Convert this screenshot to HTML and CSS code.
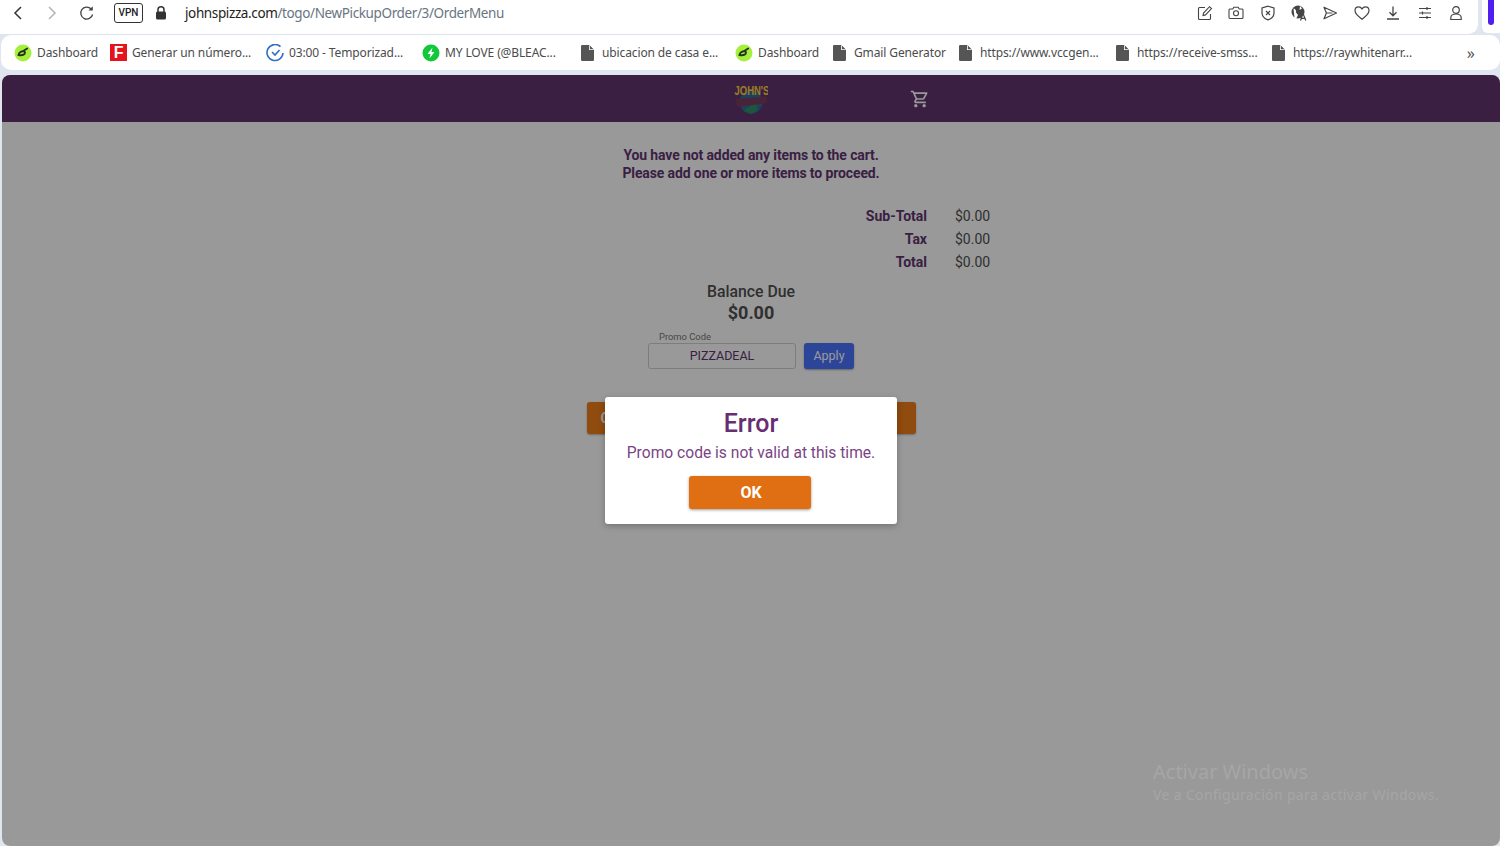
FILE: index.html
```html
<!DOCTYPE html>
<html lang="es">
<head>
<meta charset="utf-8">
<title>John's Pizza</title>
<link rel="stylesheet" href="styles.css">
</head>
<body>
<svg class="defs" width="0" height="0" aria-hidden="true">
  <symbol id="file" viewBox="0 0 13 16"><path d="M1.2 0H8l5 5v9.8a1.2 1.2 0 0 1-1.2 1.2H1.2A1.2 1.2 0 0 1 0 14.800V1.200A1.200 1.200 0 0 1 1.200 0z" fill="#555"/><path d="M8 0v5h5" fill="#fff"/><path d="M8.800 0.600 12.600 4.200H8.800z" fill="#555"/></symbol>
  <symbol id="dash" viewBox="0 0 18 18"><circle cx="9" cy="9" r="8.500" fill="#a6ef3e"/><path d="M4.500 11c.5-2.500 3-4.200 5.200-3.700 1.700.4 1.700 2.600 0 3.400-1.800.8-3.900.6-5.200.3zM10 6.500l3.200-2" fill="none" stroke="#23331a" stroke-width="1.900" stroke-linecap="round"/></symbol>
</svg>
<div class="chrome">
  <div class="topline">
    <nav class="toolbar">
      <svg class="nav back" width="10" height="14" viewBox="0 0 10 14"><path d="M8 1 2 7l6 6" fill="none" stroke="#333" stroke-width="1.500"/></svg>
      <svg class="nav fwd" width="10" height="14" viewBox="0 0 10 14"><path d="m2 1 6 6-6 6" fill="none" stroke="#b4b4b4" stroke-width="1.500"/></svg>
      <svg class="nav reload" width="16" height="16" viewBox="0 0 16 16"><path d="M13.600 9.500A6 6 0 1 1 12 3.800" fill="none" stroke="#444" stroke-width="1.300"/><path d="M13.800 1.200v4.300H9.500z" fill="#444"/></svg>
      <span class="vpn">VPN</span>
      <svg class="lock" width="12" height="14" viewBox="0 0 12 14"><path d="M3 6V3.800a3 3 0 0 1 6 0V6" fill="none" stroke="#333" stroke-width="1.500"/><rect x="1" y="5.500" width="10" height="8" rx="1.500" fill="#333"/></svg>
      <div class="url"><span class="domain">johnspizza.com</span>/togo/NewPickupOrder/3/OrderMenu</div>
      <div class="tools">
        <svg width="16" height="16" viewBox="0 0 16 16"><path d="M8 2.500H2.500a1 1 0 0 0-1 1v10a1 1 0 0 0 1 1h10a1 1 0 0 0 1-1V9M6 10.500l.5-2.500 6-6.300 2 1.900-6 6.300z" fill="none" stroke="#444" stroke-width="1.100"/></svg>
        <svg width="16" height="16" viewBox="0 0 16 16"><path d="M1 5a1 1 0 0 1 1-1h2.800l1-1.800h4.400l1 1.800H14a1 1 0 0 1 1 1v7.500a1 1 0 0 1-1 1H2a1 1 0 0 1-1-1z" fill="none" stroke="#444" stroke-width="1.100"/><circle cx="8" cy="8.300" r="2.500" fill="none" stroke="#444" stroke-width="1.100"/></svg>
        <svg width="16" height="16" viewBox="0 0 16 16"><path d="M8 1.200 14 3v5c0 3.500-2.800 5.800-6 6.900C4.800 13.800 2 11.500 2 8V3z" fill="none" stroke="#444" stroke-width="1.200"/><path d="m6 6 4 4m0-4-4 4" stroke="#444" stroke-width="1.100"/></svg>
        <svg width="16" height="16" viewBox="0 0 16 16"><circle cx="7" cy="7" r="6.500" fill="#444"/><path d="M2.500 3.500c2 .5 3 2 2.500 4L7 10l-1.500 3h-2zM9 1l2 2.500L8.500 5z" fill="#fff"/><path d="M9.500 15.500 12 8.500l2.800 7M10.500 13.300h3.500" fill="#fff" stroke="#444" stroke-width="1.200"/></svg>
        <svg width="16" height="16" viewBox="0 0 16 16"><path d="M2 2.200 14.500 8 2 13.800 4.400 8zM4.400 8h6" fill="none" stroke="#444" stroke-width="1.200" stroke-linejoin="round"/></svg>
        <svg width="16" height="16" viewBox="0 0 16 16"><path d="M8 14.200C3.500 11 1 8.600 1 5.600 1 3.300 2.700 1.800 4.600 1.800c1.400 0 2.600.8 3.400 2.100.8-1.300 2-2.100 3.400-2.100 1.900 0 3.600 1.500 3.600 3.800 0 3-2.500 5.400-7 8.600z" fill="none" stroke="#444" stroke-width="1.200"/></svg>
        <svg width="16" height="16" viewBox="0 0 16 16"><path d="M8 1.500v9M4.500 7.300 8 10.800l3.500-3.500M2 14h12" fill="none" stroke="#444" stroke-width="1.300"/></svg>
        <svg width="16" height="16" viewBox="0 0 16 16"><path d="M2 3.500h12M2 8h12M2 12.500h12" stroke="#444" stroke-width="1.200"/><path d="M10 2v3M5.500 6.500v3M10 11v3" stroke="#444" stroke-width="1.200"/></svg>
        <svg width="16" height="16" viewBox="0 0 16 16"><circle cx="8" cy="5" r="3.300" fill="none" stroke="#444" stroke-width="1.200"/><path d="M2.800 14.500v-1.600c0-2.200 2-3.900 5.200-3.900s5.200 1.700 5.200 3.900v1.600z" fill="none" stroke="#444" stroke-width="1.200"/></svg>
      </div>
    </nav>
    <div class="sidepanel"><span class="pill"></span></div>
  </div>
  <div class="bookmarks">
    <a class="bm"><svg width="18" height="18"><use href="#dash"/></svg>Dashboard</a>
    <a class="bm"><span class="favf">F</span>Generar un número...</a>
    <a class="bm"><svg width="18" height="18" viewBox="0 0 18 18"><path d="M14.500 2.700A8 8 0 1 0 17 9" fill="none" stroke="#2f6fc0" stroke-width="1.600"/><path d="m6 8 3 3 4.500-5" fill="none" stroke="#2f6fc0" stroke-width="1.600"/></svg>03:00 - Temporizad...</a>
    <a class="bm"><svg width="18" height="18" viewBox="0 0 18 18"><circle cx="9" cy="9" r="8.500" fill="#12c83a"/><path d="M10.500 3.500 5.500 10h3l-1 4.500L12.500 8h-3z" fill="#fff"/></svg>MY LOVE (@BLEAC...</a>
    <a class="bm file"><svg width="13" height="16"><use href="#file"/></svg>ubicacion de casa e...</a>
    <a class="bm"><svg width="18" height="18"><use href="#dash"/></svg>Dashboard</a>
    <a class="bm file"><svg width="13" height="16"><use href="#file"/></svg>Gmail Generator</a>
    <a class="bm file"><svg width="13" height="16"><use href="#file"/></svg>https://www.vccgen...</a>
    <a class="bm file"><svg width="13" height="16"><use href="#file"/></svg>https://receive-smss...</a>
    <a class="bm file"><svg width="13" height="16"><use href="#file"/></svg>https://raywhitenarr...</a>
    <span class="more">»</span>
  </div>
</div>

<div class="page">
  <header class="appbar">
    <span></span>
    <svg class="logo" width="34" height="32" viewBox="0 0 34 32">
      <circle cx="17" cy="20" r="11.500" fill="#2c6f9c"/>
      <path d="M10 29c3-4 8-5 12-8l2 7-7 4z" fill="#2f8f6a"/>
      <path d="M2 17 32 14.500 33 21 3 25z" fill="#7b3d60"/>
      <text class="logotext" transform="translate(0.500 12.500) scale(.73 1)">JOHN'S</text>
    </svg>
    <svg class="cart" width="20" height="20" viewBox="0 0 24 24"><path fill="#fff" d="M15.550 13c.750 0 1.410-.410 1.750-1.030l3.580-6.490c.370-.660-.110-1.480-.870-1.480H5.210l-.940-2H1v2h2l3.600 7.590-1.350 2.440C4.520 15.370 5.480 17 7 17h12v-2H7l1.100-2h7.450zM6.160 6h12.150l-2.760 5H8.530L6.160 6zM7 18c-1.100 0-1.990.900-1.990 2S5.900 22 7 22s2-.900 2-2-.900-2-2-2zm10 0c-1.100 0-1.990.900-1.990 2s.890 2 1.990 2 2-.900 2-2-.900-2-2-2z"/></svg>
  </header>
  <main class="content">
    <p class="notice">You have not added any items to the cart.<br>Please add one or more items to proceed.</p>
    <dl class="totals">
      <dt>Sub-Total</dt><dd>$0.00</dd>
      <dt>Tax</dt><dd>$0.00</dd>
      <dt>Total</dt><dd>$0.00</dd>
    </dl>
    <div class="balance">Balance Due</div>
    <div class="amount">$0.00</div>
    <div class="promo">
      <div class="promofield">
        <label class="promolabel">Promo Code</label>
        <div class="promoinput">PIZZADEAL</div>
      </div>
      <button class="apply">Apply</button>
    </div>
    <button class="proceed">Continue</button>
  </main>
  <div class="overlay">
    <div class="dialog">
      <h2>Error</h2>
      <p>Promo code is not valid at this time.</p>
      <button class="ok">OK</button>
    </div>
  </div>
  <div class="watermark">
    <div class="wm1">Activar Windows</div>
    <div class="wm2">Ve a Configuración para activar Windows.</div>
  </div>
</div>
</body>
</html>
```
FILE: styles.css
```css
* { box-sizing: border-box; }
html, body { margin: 0; height: 846px; overflow: hidden; }
body { background: #dfe6ef; font-family: "Roboto", sans-serif; display: flex; flex-direction: column; }
.defs { position: absolute; }

.chrome { height: 75px; flex: none; }
.topline { display: flex; height: 35px; }
.toolbar { flex: 1; background: #fff; margin-right: 4px; border-radius: 0 0 10px 0; display: flex; align-items: center; padding-bottom: 8px; border-bottom: 1px solid #dde3ee; }
.nav { flex: none; }
.back { margin-left: 13px; }
.fwd { margin-left: 24px; }
.reload { margin-left: 22px; }
.vpn { margin-left: 19px; width: 29px; height: 20px; border: 1px solid #333; border-radius: 3px; font: 500 10px/18px "Roboto", sans-serif; text-align: center; color: #222; }
.lock { margin-left: 12px; }
.url { margin-left: 18px; font: 13.500px "Noto Sans", sans-serif; letter-spacing: -.38px; color: #69757f; }
.domain { color: #222; }
.tools { margin-left: auto; margin-right: 14px; display: flex; gap: 15.400px; }
.sidepanel { width: 18px; background: #fff; border-radius: 0 0 0 6px; height: 33px; }
.pill { display: block; width: 6px; height: 25px; margin-left: 6px; background: #4f1ff0; border-radius: 0 0 3px 3px; }

.bookmarks { height: 35px; background: #fff; border-radius: 10px; margin: 0 0 0 1px; display: grid; grid-template-columns: 96px 156px 156px 159px 154px 98px 126px 157px 156px 1fr auto; align-items: center; padding-left: 13px; }
.bm { display: flex; align-items: center; gap: 5px; font: 12px "Noto Sans", sans-serif; letter-spacing: -.12px; color: #4b4b4b; white-space: nowrap; }
.bm.file { gap: 8px; }
.favf { width: 17px; height: 17px; background: #e4141c; color: #fff; font: 700 16px/17px "Liberation Sans", sans-serif; text-align: center; }
.more { margin-right: 25px; font: 16px "Noto Sans", sans-serif; color: #555; }

.page { flex: 1; margin-left: 2px; position: relative; background: #fff; border-radius: 8px; overflow: hidden; }
.appbar { height: 47px; background: #623571; display: grid; grid-template-columns: 1fr auto 1fr; align-items: center; }
.logo { margin-top: -2px; }
.logotext { font: 700 13px "Liberation Sans", sans-serif; fill: #ffd040; }
.cart { margin-left: 142px; margin-top: 1px; }

.content { display: flex; flex-direction: column; align-items: center; color: #623571; }
.notice { margin: 24px 0 0; font: 700 14px/18px "Roboto", sans-serif; letter-spacing: -.12px; text-align: center; }
.totals { margin: 23px 0 0; width: 480px; display: grid; grid-template-columns: 1fr 36px; column-gap: 28px; line-height: 23px; font-size: 14px; }
.totals dt { text-align: right; font-weight: 700; }
.totals dd { margin: 0; color: #505050; }
.balance { margin-top: 8px; font: 500 15.800px/20px "Roboto", sans-serif; color: #505050; }
.amount { font: 700 18px/22px "Roboto", sans-serif; color: #505050; }
.promo { margin-top: 7px; display: flex; gap: 8px; align-items: flex-end; }
.promofield { width: 148px; }
.promolabel { display: block; padding-left: 11px; font: 9.400px/12px "Roboto", sans-serif; color: #777; }
.promoinput { height: 26px; border: 1px solid #d0d0d0; border-radius: 3px; font: 12.500px/24px "Roboto", sans-serif; text-align: center; color: #623571; }
.apply { width: 50px; height: 26px; padding: 0 0 2px; border: 0; border-radius: 3px; background: #4a73ff; color: #fff; font: 400 12.500px "Roboto", sans-serif; box-shadow: 0 1px 2px rgba(0,0,0,.35); }
.proceed { margin-top: 33px; width: 329px; height: 32px; border: 0; border-radius: 3px; background: #f07d18; color: #fff; font: 700 14px "Roboto", sans-serif; text-align: left; padding: 0 0 0 14px; box-shadow: 0 1px 2px rgba(0,0,0,.3); }

.overlay { position: absolute; inset: 0; background: rgba(0,0,0,.4); display: flex; justify-content: center; align-items: flex-start; padding-top: 322px; }
.dialog { width: 292px; height: 127px; background: #fff; border-radius: 3px; box-shadow: 0 2px 6px rgba(0,0,0,.25); display: flex; flex-direction: column; align-items: center; padding-top: 12px; }
.dialog h2 { margin: 0; font: 500 25px/30px "Roboto", sans-serif; color: #682e72; }
.dialog p { margin: 4px 0 0; font: 15.600px/20px "Roboto", sans-serif; color: #7a4484; }
.ok { margin: 13px 2px 0 0; width: 122px; height: 33px; padding: 0 0 0 2px; border: 0; border-radius: 3px; background: #e06f14; color: #fff; font: 700 16px "Roboto", sans-serif; box-shadow: 0 1px 3px rgba(0,0,0,.4); }

.watermark { position: absolute; left: 1151px; top: 685px; color: #a6a6a6; font-family: "Noto Sans", sans-serif; white-space: nowrap; }
.wm1 { font-size: 20px; line-height: 24px; }
.wm2 { font-size: 14px; line-height: 20px; margin-top: 1px; letter-spacing: .35px; }
```
